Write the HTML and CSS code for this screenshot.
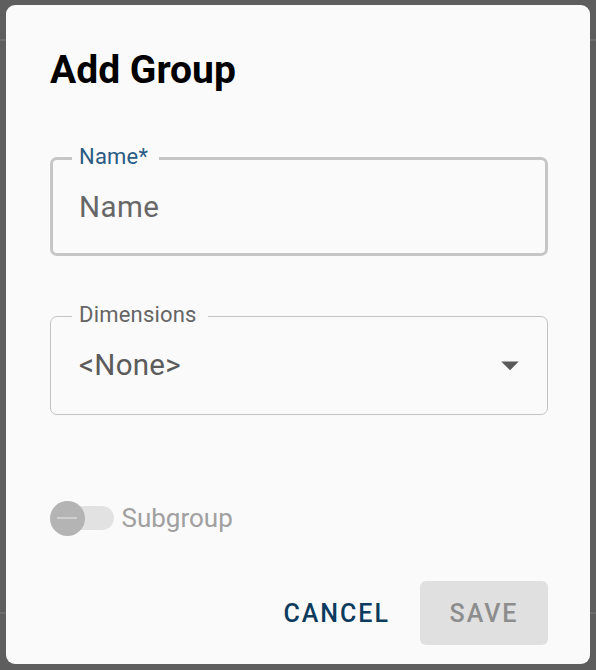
FILE: index.html
```html
<!DOCTYPE html>
<html>
<head>
<meta charset="utf-8">
<link rel="stylesheet" href="styles.css">
</head>
<body>
<div class="dialog">
  <h2 class="title">Add Group</h2>
  <fieldset class="field field-focus">
    <legend class="field-label label-primary">Name*</legend>
    <div class="field-input">Name</div>
  </fieldset>
  <fieldset class="field field-select">
    <legend class="field-label">Dimensions</legend>
    <div class="select-row">
      <span class="select-value">&lt;None&gt;</span>
      <svg class="select-arrow" viewBox="0 0 24 24" width="42" height="42"><path d="M7 10l5 5 5-5z" fill="#5a5a5a"/></svg>
    </div>
  </fieldset>
  <div class="switch-row">
    <div class="switch">
      <div class="switch-track"></div>
      <div class="switch-thumb"><div class="thumb-minus"></div></div>
    </div>
    <span class="switch-label">Subgroup</span>
  </div>
  <div class="actions">
    <button class="btn btn-text">CANCEL</button>
    <button class="btn btn-disabled">SAVE</button>
  </div>
</div>
</body>
</html>
```
FILE: styles.css
```css
html, body {
  margin: 0;
  padding: 0;
}
body {
  width: 596px;
  height: 670px;
  background-color: #5e5e5e;
  background-image:
    linear-gradient(#6c6c6c, #6c6c6c),
    linear-gradient(#6c6c6c, #6c6c6c);
  background-size: 596px 2px, 596px 2px;
  background-position: 0 39px, 0 612px;
  background-repeat: no-repeat;
  font-family: Roboto, "Liberation Sans", sans-serif;
  overflow: hidden;
}
.dialog {
  box-sizing: border-box;
  margin: 5px 6px;
  width: 584px;
  height: 659px;
  background: #fafafa;
  border-radius: 9px;
  padding: 43px 42px 0 44px;
  display: flex;
  flex-direction: column;
}
.title {
  margin: 0;
  font-size: 39px;
  line-height: 44px;
  font-weight: 700;
  color: #000;
}
.field {
  margin: 0;
  min-width: 0;
  border-style: solid;
  border-color: #c6c6c6;
  border-radius: 7px;
}
.field-focus {
  margin-top: 54.5px;
  border-width: 3px;
  padding: 0 0 0 26px;
}
.field-select {
  margin-top: 48.5px;
  border-width: 1px;
  border-color: #c4c4c4;
  padding: 0 0 0 28px;
}
.field-label {
  font-size: 22px;
  line-height: 19px;
  padding: 0 11px 5px 7px;
  margin-left: -7px;
  color: #656565;
  letter-spacing: 0.2px;
}
.label-primary {
  color: #2a5b85;
}
.field-input {
  height: 73px;
  line-height: 73px;
  padding-bottom: 9.5px;
  font-size: 29.5px;
  color: #676767;
  letter-spacing: 0.4px;
}
.select-row {
  height: 73px;
  padding-bottom: 12.5px;
  display: flex;
  align-items: center;
  padding-right: 16px;
}
.select-value {
  flex: 1;
  font-size: 29.5px;
  line-height: 73px;
  color: #5b5b5b;
  letter-spacing: 0.3px;
}
.select-arrow {
  display: block;
  flex: none;
}
.switch-row {
  margin-top: 85.5px;
  height: 35px;
  display: flex;
  align-items: center;
}
.switch {
  position: relative;
  width: 64px;
  height: 35px;
  margin-left: -0.5px;
  flex: none;
}
.switch-track {
  position: absolute;
  left: 10px;
  top: 5.5px;
  width: 54px;
  height: 24px;
  border-radius: 12px;
  background: #e2e2e2;
}
.switch-thumb {
  position: absolute;
  left: 0;
  top: 0;
  width: 35px;
  height: 35px;
  border-radius: 50%;
  background: #b4b4b4;
  display: flex;
  align-items: center;
  justify-content: center;
}
.thumb-minus {
  width: 20px;
  height: 2px;
  background: #cfcfcf;
}
.switch-label {
  margin-left: 8px;
  font-size: 26px;
  color: #a0a0a0;
}
.actions {
  margin-top: 45.5px;
  display: flex;
  justify-content: flex-end;
  align-items: center;
  gap: 17px;
}
.btn {
  font-family: Roboto, "Liberation Sans", sans-serif;
  font-weight: 500;
  font-size: 25px;
  letter-spacing: 2px;
  border: none;
  height: 64px;
  border-radius: 6px;
  margin: 0;
}
.btn-text {
  background: transparent;
  color: #0c3b5e;
  padding: 0 13px;
}
.btn-disabled {
  background: #e0e0e0;
  color: #8d8d8d;
  width: 128px;
  padding: 0;
}
```
